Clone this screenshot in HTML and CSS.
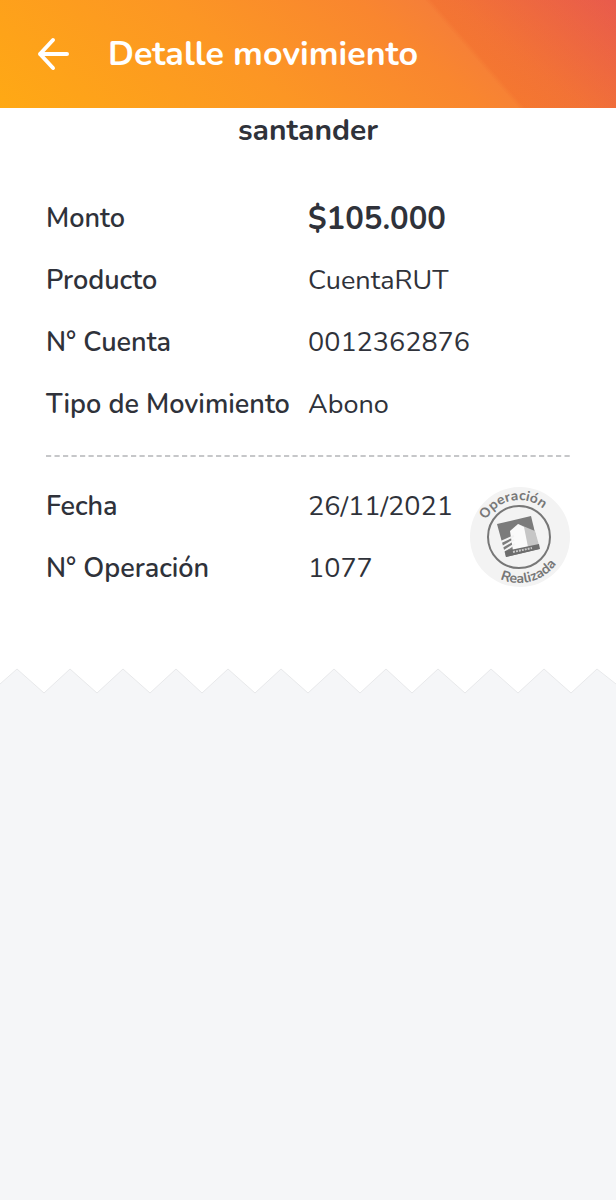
FILE: index.html
```html
<!DOCTYPE html>
<html lang="es">
<head>
<meta charset="utf-8">
<meta name="viewport" content="width=device-width, initial-scale=1">
<title>Detalle movimiento</title>
<link rel="stylesheet" href="styles.css">
</head>
<body>
<header class="topbar">
  <button class="back" type="button" aria-label="Volver">
    <svg width="36" height="36" viewBox="0 0 36 36" fill="none" stroke="currentColor" stroke-width="4" stroke-linecap="round" stroke-linejoin="round"><path d="M17 4 4 18l13 14M4 18h27"/></svg>
  </button>
  <h1 class="title">Detalle movimiento</h1>
</header>
<main class="receipt">
  <h2 class="payee">santander</h2>
  <dl class="details">
    <dt>Monto</dt><dd class="amount">$105.000</dd>
    <dt>Producto</dt><dd>CuentaRUT</dd>
    <dt>N° Cuenta</dt><dd>0012362876</dd>
    <dt>Tipo de Movimiento</dt><dd>Abono</dd>
  </dl>
  <svg class="divider" width="100%" height="2" aria-hidden="true"><line x1="0" y1="1" x2="100%" y2="1" stroke="#c6c7c9" stroke-width="2" stroke-dasharray="5.2 3.3"/></svg>
  <div class="operation">
    <dl class="details">
      <dt>Fecha</dt><dd>26/11/2021</dd>
      <dt>N° Operación</dt><dd>1077</dd>
    </dl>
    <svg class="seal" width="100" height="100" viewBox="0 0 100 100" role="img" aria-label="Operación Realizada">
      <defs>
        <path id="arc-top" d="M12 49a37 37 0 0 1 74 0"/>
        <path id="arc-bottom" d="M3 49a46 46 0 0 0 92 0"/>
      </defs>
      <circle cx="50" cy="49" r="50" fill="#f3f3f3"/>
      <circle cx="49" cy="49" r="31" fill="none" stroke="#777" stroke-width="2"/>
      <g class="seal-text">
        <text transform="rotate(-11 49 49)"><textPath href="#arc-top" startOffset="50%">Operación</textPath></text>
        <text transform="rotate(-15 49 49)"><textPath href="#arc-bottom" startOffset="50%">Realizada</textPath></text>
      </g>
      <path fill="#7b7b7b" d="m27 36 34-8 8 33-33 8z"/>
      <path fill="#fafafa" d="m48 36-8 7 3 20 14-3z"/>
      <path fill="#c6c6c6" d="m48 36 17 7 4 14-12 3z"/>
      <path fill="#fafafa" d="m48 36 6 3 4 20-9 3z"/>
      <path d="m31 54 13-6M32 59l12-7M34 63l11-7" stroke="#f3f3f3" stroke-width="2"/>
      <path fill="#6d6d6d" d="m35 63 34-7 1 5-34 8z"/>
      <path d="m43 64 19-4" stroke="#c9c9c9" stroke-width="2" stroke-dasharray="2 1"/>
    </svg>
  </div>
</main>
<svg class="tear" viewBox="0 0 616 27" preserveAspectRatio="none" aria-hidden="true">
  <path fill="#fff" d="M0 0H616V17L597 2 571 26 544 2 518 26 491 2 465 26 438 2 412 26 386 2 360 26 334 2 308 26 281 2 255 26 228 2 202 26 176 2 150 26 123 2 97 26 70 2 44 26 17 2 0 17z"/>
  <path fill="none" stroke="#e8e9eb" d="M616 17 597 2 571 26 544 2 518 26 491 2 465 26 438 2 412 26 386 2 360 26 334 2 308 26 281 2 255 26 228 2 202 26 176 2 150 26 123 2 97 26 70 2 44 26 17 2 0 17"/>
</svg>
</body>
</html>
```
FILE: styles.css
```css
* {
  box-sizing: border-box;
}

body {
  margin: 0;
  background: #f5f6f8;
  color: #2f323a;
  font-family: Nunito, "Open Sans", "Noto Sans", sans-serif;
}

.topbar {
  display: flex;
  align-items: center;
  gap: 36px;
  height: 108px;
  padding: 0 36px;
  color: #fff;
  background:
    linear-gradient(49deg, transparent 73%, rgba(238, 92, 36, 0.28) 74%, rgba(238, 92, 36, 0.28) 100%),
    linear-gradient(40deg, #ffa914 0%, #fc9624 40%, #f9862f 65%, #f47c3c 78%, #e65a5c 100%);
}

.back {
  display: flex;
  padding: 0;
  border: 0;
  background: none;
  color: inherit;
}

.title {
  margin: 0;
  font-size: 34px;
  font-weight: 700;
  line-height: 40px;
}

.receipt {
  padding: 5px 46px 78px;
  background: #fff;
}

.payee {
  margin: 0 0 50px;
  font-size: 30px;
  font-weight: 700;
  line-height: 36px;
  text-align: center;
}

.details {
  display: grid;
  grid-template-columns: 262px 1fr;
  row-gap: 22px;
  margin: 0;
  font-size: 27px;
  line-height: 40px;
  white-space: nowrap;
}

.details dt {
  font-weight: 640;
}

.details dd {
  margin: 0;
}

.details .amount {
  font-size: 31px;
  font-weight: 700;
}

.divider {
  display: block;
  margin: 30px 0;
}

.operation {
  display: flex;
  align-items: center;
  justify-content: space-between;
}

.seal {
  flex: none;
  overflow: visible;
}

.seal-text {
  fill: #777;
  font-size: 14px;
  font-weight: 700;
  text-anchor: middle;
}

.tear {
  display: block;
  width: 100%;
  height: 27px;
}
```
